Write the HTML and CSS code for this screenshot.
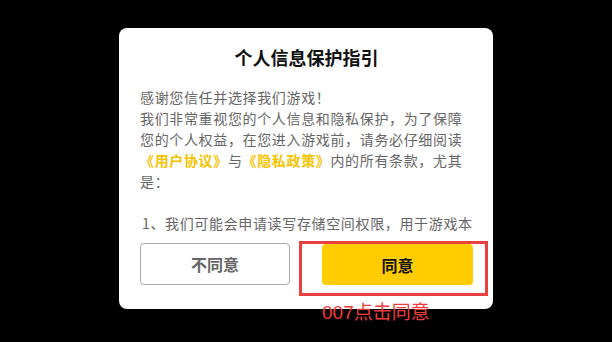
FILE: index.html
```html
<!DOCTYPE html>
<html lang="zh-CN">
<head>
<meta charset="utf-8">
<link rel="stylesheet" href="styles.css">
</head>
<body>
<div class="page">
  <div class="dialog">
    <h1 class="title">个人信息保护指引</h1>
    <div class="content">
      <p class="para">感谢您信任并选择我们游戏！<br>我们非常重视您的个人信息和隐私保护，为了保障您的个人权益，在您进入游戏前，请务必仔细阅读<span class="link">《用户协议》</span>与<span class="link">《隐私政策》</span>内的所有条款，尤其是：</p>
      <p class="para item">1、我们可能会申请读写存储空间权限，用于游戏本地数据的缓存和存储。</p>
    </div>
    <div class="actions">
      <button class="btn btn-disagree">不同意</button>
      <button class="btn btn-agree">同意</button>
    </div>
  </div>
  <div class="mark-box"></div>
  <div class="mark-label">007点击同意</div>
</div>
</body>
</html>
```
FILE: styles.css
```css
html, body {
  margin: 0;
  padding: 0;
  background: #000;
  width: 612px;
  height: 342px;
  overflow: hidden;
  font-family: "Noto Sans CJK SC", "Noto Sans", sans-serif;
}
.page {
  position: relative;
  width: 612px;
  height: 342px;
  display: flex;
  justify-content: center;
  align-items: flex-start;
  padding-top: 28px;
  box-sizing: border-box;
}
.dialog {
  width: 374px;
  height: 281px;
  background: #fff;
  border-radius: 8px;
  display: flex;
  flex-direction: column;
  box-sizing: border-box;
  padding: 0 20px 24px 21px;
}
.title {
  margin: 17px 0 0;
  font-size: 18px;
  line-height: 24px;
  font-weight: 700;
  text-align: center;
  color: #111;
}
.content {
  margin-top: 18px;
  height: 146px;
  overflow: hidden;
  color: #666;
  font-size: 14px;
  line-height: 21px;
  letter-spacing: 0.65px;
}
.para {
  margin: 0;
}
.item {
  margin-top: 21px;
  padding-left: 2px;
}
.link {
  color: #f7c300;
  font-weight: 700;
}
.actions {
  margin-top: auto;
  display: flex;
  justify-content: space-between;
  align-items: flex-end;
}
.btn {
  font-family: "Noto Sans CJK SC", "Noto Sans", sans-serif;
  font-size: 16px;
  font-weight: 700;
  border-radius: 4px;
  padding: 0;
  box-sizing: border-box;
}
.btn-disagree {
  width: 150px;
  height: 42px;
  background: #fff;
  border: 1px solid #aaa;
  color: #666;
}
.btn-agree {
  width: 151px;
  height: 41px;
  background: #ffcc00;
  border: none;
  color: #111;
}
.mark-box {
  position: absolute;
  left: 299px;
  top: 241px;
  width: 189px;
  height: 55px;
  border: 3px solid #e8403f;
  box-sizing: border-box;
}
.mark-label {
  position: absolute;
  left: 322px;
  top: 300px;
  font-size: 19px;
  line-height: 26px;
  color: #f23b3b;
  font-family: "Liberation Sans", "Noto Sans CJK SC", sans-serif;
}
```
